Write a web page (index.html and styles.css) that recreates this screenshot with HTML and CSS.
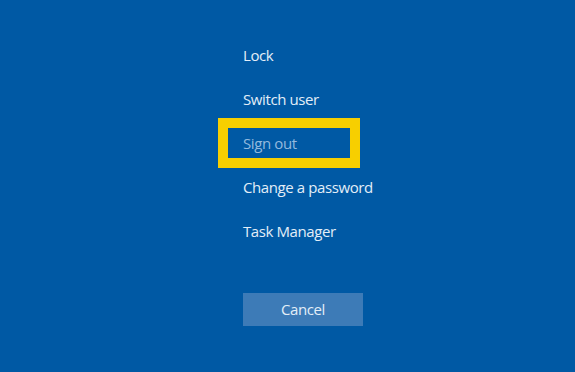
FILE: index.html
```html
<!DOCTYPE html>
<html lang="en">
<head>
    <meta charset="UTF-8">
    <meta name="viewport" content="width=device-width, initial-scale=1.0">
    <title>Security options</title>
    <link rel="stylesheet" href="styles.css">
</head>
<body>
    <div class="options">
        <div class="option">Lock</div>
        <div class="option">Switch user</div>
        <div class="option current">Sign out</div>
        <div class="option">Change a password</div>
        <div class="option">Task Manager</div>
        <button class="cancel">Cancel</button>
    </div>
</body>
</html>
```

FILE: styles.css
```css
html, body {
    margin: 0;
    height: 100%;
}
body {
    background: #0059a4;
    font-family: "Open Sans", "Noto Sans", sans-serif;
    color: #e3eef8;
}
.options {
    display: flex;
    flex-direction: column;
    align-items: flex-start;
    padding: 33px 0 0 243px;
}
.option {
    position: relative;
    height: 44px;
    line-height: 44px;
    font-size: 15px;
    letter-spacing: -0.4px;
}
.option.current {
    color: #93b9de;
}
.option.current::before {
    content: '';
    position: absolute;
    left: -25px;
    top: -3px;
    width: 142px;
    height: 50px;
    border: 10px solid #f7cf00;
    box-sizing: border-box;
}
.cancel {
    margin-top: 40px;
    width: 120px;
    height: 33px;
    border: none;
    padding: 0 0 2px;
    background: #3d7bb7;
    color: #e3eef8;
    font-family: inherit;
    font-size: 15px;
    letter-spacing: -0.4px;
}
```
